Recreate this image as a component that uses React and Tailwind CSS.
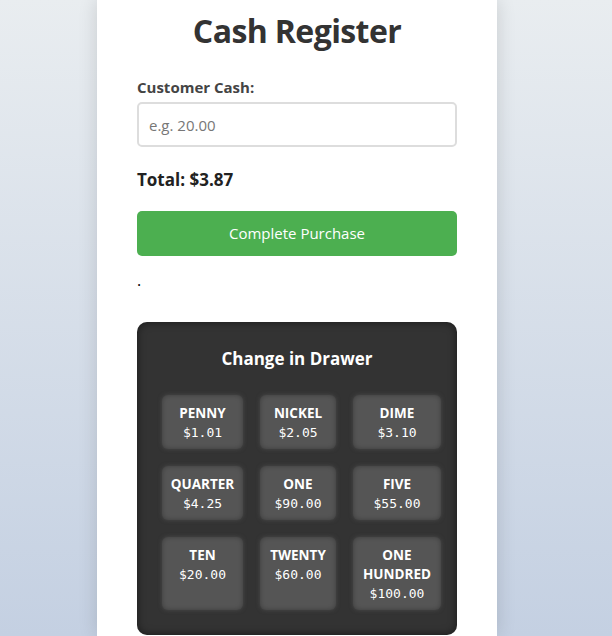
const drawer = [
  { name: 'PENNY', amount: '$1.01' },
  { name: 'NICKEL', amount: '$2.05' },
  { name: 'DIME', amount: '$3.10' },
  { name: 'QUARTER', amount: '$4.25' },
  { name: 'ONE', amount: '$90.00' },
  { name: 'FIVE', amount: '$55.00' },
  { name: 'TEN', amount: '$20.00' },
  { name: 'TWENTY', amount: '$60.00' },
  { name: 'ONE HUNDRED', amount: '$100.00' },
]

const sans = "font-['Open_Sans','Noto_Sans',sans-serif]"

export default function App() {
  return (
    <div className={`min-h-screen flex justify-center pr-[18px] bg-gradient-to-b from-[#e9edf0] to-[#c4d0e2] ${sans}`}>
      <div className="w-[400px] bg-white px-10 pt-[11px] shadow-[0_0_18px_rgba(0,0,0,0.14)]">
        <h1 className="text-center text-[32px] leading-[40px] font-bold text-[#333] tracking-[-0.6px]">
          Cash Register
        </h1>

        <label className="block mt-6 text-[15px] leading-6 font-bold text-[#444]">Customer Cash:</label>
        <input
          type="text"
          placeholder="e.g. 20.00"
          className="mt-[3px] block w-full h-[45px] px-[10px] border-2 border-[#ddd] rounded-[5px] text-[15px] text-[#333] placeholder:text-[#777] outline-none"
        />

        <p className="mt-[19px] text-[17px] leading-[27px] font-bold text-[#222]">Total: $3.87</p>

        <button
          type="button"
          className="mt-[18px] w-full h-[45px] rounded-[5px] bg-[#4caf50] text-white text-[15px]"
        >
          Complete Purchase
        </button>

        <p className="mt-3 text-base leading-6 text-black">.</p>

        <div className="mt-[30px] rounded-[10px] bg-[#333] pt-[23px] pb-[25px] shadow-[inset_0_0_8px_rgba(0,0,0,0.5)]">
          <h2 className="text-center text-[17px] leading-[27px] font-bold text-white">Change in Drawer</h2>
          <div className="mt-[23px] ml-[25px] grid grid-cols-[81px_76px_88px] gap-[17px]">
            {drawer.map((d) => (
              <div
                key={d.name}
                className="rounded-[6px] bg-[#555] pt-[9px] pb-[7px] px-2 text-center text-white shadow-[inset_0_0_5px_rgba(0,0,0,0.3),0_0_4px_rgba(85,85,85,0.7)]"
              >
                <div className="text-[13.5px] leading-[19px] font-bold">{d.name}</div>
                <div className="font-['DejaVu_Sans_Mono','Liberation_Mono',monospace] text-[13px] leading-[19px]">
                  {d.amount}
                </div>
              </div>
            ))}
          </div>
        </div>
      </div>
    </div>
  )
}
